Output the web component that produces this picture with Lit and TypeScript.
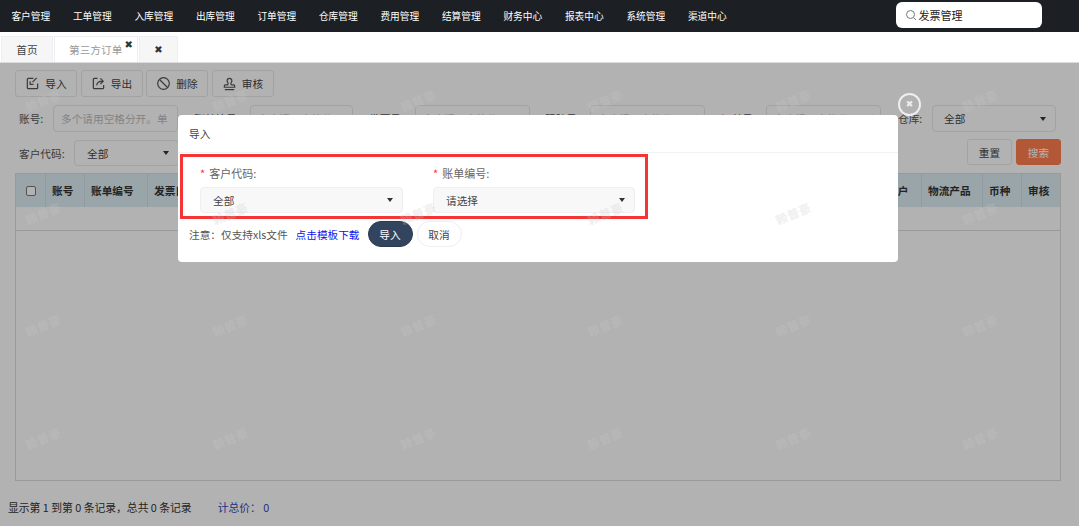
import { LitElement, html, css } from "lit";
import { customElement } from "lit/decorators.js";

const NAV = ["客户管理","工单管理","入库管理","出库管理","订单管理","仓库管理","费用管理","结算管理","财务中心","报表中心","系统管理","渠道中心"];
const PH = "多个请用空格分开。单";
const marks: [number, number][] = [];
for (const y of [100, 213, 325, 438]) for (const x of [43, 230, 418, 605, 793, 980]) marks.push([x, y]);

const arrow = html`<i class="caret"></i>`;
const icons = {
  imp: html`<svg viewBox="0 0 16 16"><path d="M9 2.500H3.500a1 1 0 0 0-1 1v9a1 1 0 0 0 1 1h9a1 1 0 0 0 1-1V8"/><path d="M12.500 2 8 6.500M5.500 5.500v3.500H9"/></svg>`,
  exp: html`<svg viewBox="0 0 16 16"><path d="M7 2.500H3.500a1 1 0 0 0-1 1v9a1 1 0 0 0 1 1h9a1 1 0 0 0 1-1V9.500"/><path d="M6 10c.5-3 2.500-4.500 6-4.500M10 2.500l3 3-3 3"/></svg>`,
  ban: html`<svg viewBox="0 0 16 16"><circle cx="8" cy="8" r="6.200"/><path d="M3.700 3.700l8.600 8.600"/></svg>`,
  stamp: html`<svg viewBox="0 0 16 16"><path d="M5.500 5a2.500 2.500 0 0 1 5 0c0 1.500-1 2-1 3.500 0 .8.500 1 1.500 1h1.500a1 1 0 0 1 1 1v1.500h-11V10.500a1 1 0 0 1 1-1H5c1 0 1.500-.2 1.500-1C6.500 7 5.500 6.500 5.500 5zM3 14.500h10"/></svg>`,
};

@customElement("app-root")
export class AppRoot extends LitElement {
  static styles = css`
    :host { display: block; height: 100vh; overflow: hidden; font-family: "Noto Sans CJK SC", "Noto Sans", sans-serif; font-size: 10.670px; color: #444; background: #fff; }
    * { box-sizing: border-box; }
    .page { display: flex; flex-direction: column; height: 526px; }
    .nav { height: 32px; flex: none; background: #1c1f23; display: flex; align-items: center; position: relative; }
    .nav-item { width: 61.500px; text-align: center; color: #fff; font-size: 9.700px; }
    .search { margin-left: 157.500px; width: 146px; height: 26px; background: #fff; border-radius: 6px; display: flex; align-items: center; padding-left: 9px; gap: 2px; color: #222; font-size: 11px; margin-top: -2px; }
    .search svg { width: 12px; height: 12px; fill: none; stroke: #777; stroke-width: 1; }
    .tabs { height: 31px; flex: none; display: flex; padding: 4px 0 0 1px; gap: 1px; border-bottom: 1px solid #ddd; }
    .tab { height: 26px; display: flex; align-items: center; justify-content: center; background: #f6f6f7; color: #444; border: 1px solid #eeeef3; border-bottom: 0; position: relative; }
    .tab.home { width: 52px; }
    .tab.active { width: 84px; background: #fff; color: #9a9a9a; justify-content: flex-start; padding-left: 14px; }
    .tab.more { width: 39px; }
    .x { font-size: 10px; font-family: "DejaVu Sans", sans-serif; font-weight: 700; color: #333; }
    .tab.active .x { position: absolute; right: 4px; top: 1px; line-height: 14px; }
    .main { flex: 1; position: relative; padding: 7px 18px 0 15px; overflow: hidden; min-height: 0; display: flex; flex-direction: column; }
    .toolbar { display: flex; gap: 3.500px; height: 27px; }
    .tool { width: 62px; border: 1px solid #e8e8e8; border-radius: 3px; display: flex; align-items: center; justify-content: center; gap: 5px; color: #444; }
    .tool svg { width: 15px; height: 15px; fill: none; stroke: #555; stroke-width: 1.300; }
    .filters { display: grid; grid-template-columns: 38px 125px 16px 56px 103px 16px 46px 115px 15px 45px 115px 16px 45px 115px 17px 34px 124px; height: 27px; margin-top: 8px; align-items: center; }
    .lbl { padding-left: 4px; white-space: nowrap; color: #555; }
    .filters .lbl.n { padding-left: 0; }
    input { width: 100%; height: 27px; border: 1px solid #e9e9e9; border-radius: 4px; padding: 0 7px; font: inherit; background: #fff; outline: 0; }
    input::placeholder { color: #bcbcbc; }
    .sel { height: 27px; border: 1px solid #e9e9e9; border-radius: 4px; padding: 0 9px 0 12px; display: flex; align-items: center; justify-content: space-between; color: #444; background: #fff; }
    .filters .sel { padding-left: 11px; }
    .caret { width: 0; height: 0; border: 3.500px solid transparent; border-top: 4px solid #333; border-bottom: 0; }
    .row2 { display: flex; align-items: flex-end; height: 27px; margin-top: 7px; }
    .row2 .lbl { width: 59px; align-self: center; padding-top: 2px; }
    .row2 .sel { width: 105px; height: 26px; }
    .btns { margin-left: auto; display: flex; gap: 4px; align-self: flex-start; }
    .btn { width: 45px; height: 26px; display: flex; align-items: center; justify-content: center; border: 1px solid #e8e8e8; border-radius: 3px; color: #444; }
    .btn.primary { background: #ff7f50; border-color: #ff7f50; color: #fff; }
    .table { margin-top: 7px; height: 308px; border: 1px solid #ddd; display: flex; flex-direction: column; }
    .thead { height: 33px; flex: none; background: #dcecf3; display: flex; font-weight: 700; color: #333; }
    .th { display: flex; align-items: center; padding-left: 6px; border-right: 1px solid #cfdfe6; white-space: nowrap; overflow: hidden; flex: none; }
    .th.check { width: 30px; padding-left: 10px; }
    .th.check i { width: 10px; height: 10px; border: 1px solid #777; border-radius: 2px; background: #fff; display: block; }
    .spacer { flex: 1; padding: 0; }
    .w39 { width: 39px; } .w63 { width: 63px; } .w60 { width: 60px; } .w41 { width: 41px; } .w61 { width: 61px; } .last { width: 38px; border-right: 0; }
    .tfill { height: 24px; border-bottom: 1px solid #ddd; flex: none; }
    .footer { display: flex; gap: 26px; margin: 18px 0 0 -7px; color: #333; font-size: 10.800px; }
    .footer .sum { color: #3344bb; }
    .overlay { position: absolute; inset: 0; background: rgba(0,0,0,.3); }
    .modal { position: absolute; left: 178px; top: 52px; width: 720px; height: 147px; background: #fff; border-radius: 4px; display: flex; flex-direction: column; }
    .m-title { height: 38px; flex: none; padding-left: 11px; display: flex; align-items: center; border-bottom: 1px solid #f1f1f6; color: #444; }
    .m-body { display: flex; gap: 30px; padding: 12px 0 0 22px; height: 68px; flex: none; }
    .m-field { width: 203px; }
    .m-field.b { width: 202px; }
    .m-label { height: 16px; line-height: 16px; color: #666; margin-bottom: 6px; white-space: nowrap; font-size: 11px; }
    .m-label b { color: #f33; font-weight: 400; margin-right: 4px; }
    .m-field .sel { height: 26px; background: #f8f8f9; border-color: #eeeef3; color: #444; }
    .m-foot { display: flex; align-items: center; padding-left: 11px; height: 26px; color: #555; }
    .m-foot a { color: #1111ee; margin-left: 8px; text-decoration: none; }
    .pill { width: 45px; height: 26px; border-radius: 13px; display: flex; align-items: center; justify-content: center; border: 1px solid #eeeef3; color: #444; }
    .pill.go { background: #33445f; border-color: #2b3a52; color: #fff; margin-left: 8px; margin-right: 4px; }
    .close { position: absolute; left: 898px; top: 30px; width: 23px; height: 23px; border-radius: 50%; border: 2px solid #eee; display: flex; align-items: center; justify-content: center; color: #eee; font-size: 9px; font-weight: 700; font-family: "DejaVu Sans", sans-serif; line-height: 1; }
    .ring { position: absolute; left: 180px; top: 91px; width: 468px; height: 65px; border: 3px solid #f33535; pointer-events: none; }
    .mark { position: absolute; transform: translate(-50%, -50%) rotate(-22deg); color: rgba(200,200,200,.3); font-size: 12px; font-weight: 700; letter-spacing: 0.500px; white-space: nowrap; pointer-events: none; }
  `;

  render() {
    return html`<div class="page">
      <div class="nav">
        ${NAV.map((n) => html`<div class="nav-item">${n}</div>`)}
        <div class="search"><svg viewBox="0 0 12 12"><circle cx="5.500" cy="5.500" r="4"/><path d="M8.500 8.500l2.500 2.500"/></svg><span>发票管理</span></div>
      </div>
      <div class="tabs">
        <div class="tab home">首页</div>
        <div class="tab active">第三方订单<span class="x">✖</span></div>
        <div class="tab more"><span class="x">✖</span></div>
      </div>
      <div class="main">
        <div class="toolbar">
          <div class="tool">${icons.imp}导入</div>
          <div class="tool">${icons.exp}导出</div>
          <div class="tool">${icons.ban}删除</div>
          <div class="tool">${icons.stamp}审核</div>
        </div>
        <div class="filters">
          <span class="lbl">账号:</span><input placeholder=${PH} /><span></span>
          <span class="lbl n">账单编号:</span><input placeholder=${PH} /><span></span>
          <span class="lbl n">发票号:</span><input placeholder=${PH} /><span></span>
          <span class="lbl n">跟踪号:</span><input placeholder=${PH} /><span></span>
          <span class="lbl n">订单号:</span><input placeholder=${PH} /><span></span>
          <span class="lbl n">仓库:</span><div class="sel">全部${arrow}</div>
        </div>
        <div class="row2">
          <span class="lbl">客户代码:</span><div class="sel">全部${arrow}</div>
          <div class="btns"><div class="btn">重置</div><div class="btn primary">搜索</div></div>
        </div>
        <div class="table">
          <div class="thead">
            <div class="th check"><i></i></div>
            <div class="th w39">账号</div>
            <div class="th w63">账单编号</div>
            <div class="th w60">发票日期</div>
            <div class="th spacer"></div>
            <div class="th w41">客户</div>
            <div class="th w61">物流产品</div>
            <div class="th w39">币种</div>
            <div class="th last">审核</div>
          </div>
          <div class="tfill"></div>
        </div>
        <div class="footer"><span>显示第 1 到第 0 条记录，总共 0 条记录</span><span class="sum">计总价： 0</span></div>
        <div class="overlay"></div>
        <div class="close">✖</div>
        <div class="modal">
          <div class="m-title">导入</div>
          <div class="m-body">
            <div class="m-field"><div class="m-label"><b>*</b>客户代码:</div><div class="sel">全部${arrow}</div></div>
            <div class="m-field b"><div class="m-label"><b>*</b>账单编号:</div><div class="sel">请选择${arrow}</div></div>
          </div>
          <div class="m-foot">注意：仅支持xls文件<a>点击模板下载</a><div class="pill go">导入</div><div class="pill">取消</div></div>
        </div>
        <div class="ring"></div>
        ${marks.map(([x, y]) => html`<span class="mark" style="left:${x}px;top:${y - 63}px">赖普豪</span>`)}
      </div>
    </div>`;
  }
}
